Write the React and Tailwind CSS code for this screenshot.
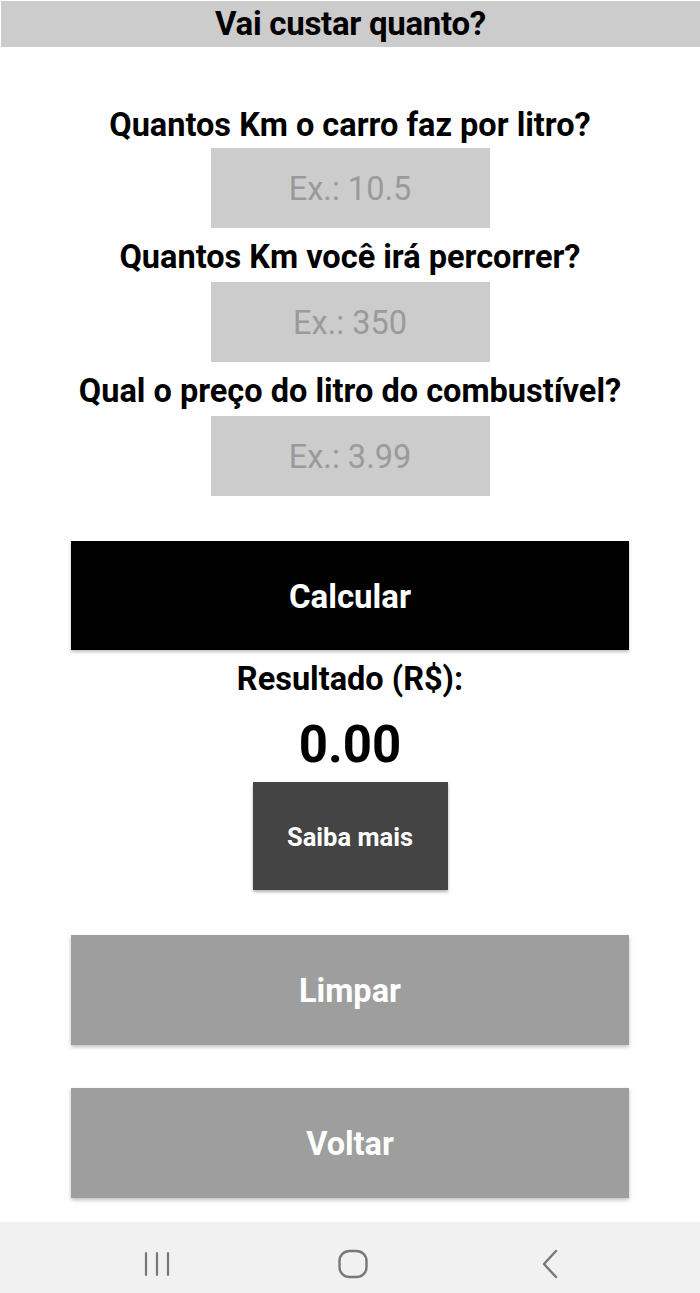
export default function App() {
  const label = "text-[32.5px] leading-[38px] font-bold text-black text-center whitespace-nowrap";
  const input = "w-[279px] h-[80px] bg-[#cccccc] flex items-center justify-center text-[32.5px] text-[#9a9a9a] pt-[2px]";
  return (
    <div className="w-[700px] h-[1293px] bg-white flex flex-col" style={{ fontFamily: "Roboto, 'Noto Sans', sans-serif" }}>
      <div className="h-[46px] mt-[1px] ml-[1px] bg-[#cccccc] flex items-center justify-center">
        <span className="text-[33px] font-bold text-black tracking-[-0.3px]">Vai custar quanto?</span>
      </div>
      <div className="flex flex-col items-center mt-[59px]">
        <div className={label}>Quantos Km o carro faz por litro?</div>
        <div className={`${input} mt-[4px]`}>Ex.: 10.5</div>
        <div className={`${label} mt-[10px]`}>Quantos Km você irá percorrer?</div>
        <div className={`${input} mt-[6px]`}>Ex.: 350</div>
        <div className={`${label} mt-[10px]`}>Qual o preço do litro do combustível?</div>
        <div className={`${input} mt-[6px]`}>Ex.: 3.99</div>
        <div className="w-[558px] h-[109px] mt-[45px] bg-black flex items-center justify-center pt-[3px] text-white text-[33px] font-bold shadow-[0_2px_3px_rgba(0,0,0,0.25)]">Calcular</div>
        <div className={`${label} mt-[10px]`}>Resultado (R$):</div>
        <div className="text-[51px] leading-[60px] font-bold text-black mt-[17px]">0.00</div>
        <div className="w-[195px] h-[108px] mt-[7px] bg-[#444444] flex items-center justify-center pt-[2px] text-white text-[25.5px] font-bold shadow-[0_2px_3px_rgba(0,0,0,0.3)]">Saiba mais</div>
        <div className="w-[558px] h-[110px] mt-[45px] bg-[#9e9e9e] flex items-center justify-center pt-[3px] text-white text-[32.5px] font-bold shadow-[0_2px_4px_rgba(0,0,0,0.25)]">Limpar</div>
        <div className="w-[558px] h-[110px] mt-[43px] bg-[#9e9e9e] flex items-center justify-center pt-[3px] text-white text-[32.5px] font-bold shadow-[0_2px_4px_rgba(0,0,0,0.25)]">Voltar</div>
      </div>
      <div className="mt-auto h-[71px] bg-[#f1f1f1] flex items-center pl-[137px] pt-[12px] gap-[156px]">
        <svg width="40" height="40" viewBox="0 0 40 40">
          <g stroke="#777" strokeWidth="2.2" strokeLinecap="round">
            <line x1="9" y1="9" x2="9" y2="31" />
            <line x1="20" y1="9" x2="20" y2="31" />
            <line x1="31" y1="9" x2="31" y2="31" />
          </g>
        </svg>
        <svg width="40" height="40" viewBox="0 0 40 40">
          <rect x="6.5" y="7" width="27" height="26" rx="10" fill="none" stroke="#777" strokeWidth="2.4" />
        </svg>
        <svg width="40" height="40" viewBox="0 0 40 40">
          <polyline points="27,7 15,20 27,33" fill="none" stroke="#777" strokeWidth="2.4" strokeLinecap="round" strokeLinejoin="round" />
        </svg>
      </div>
    </div>
  );
}
